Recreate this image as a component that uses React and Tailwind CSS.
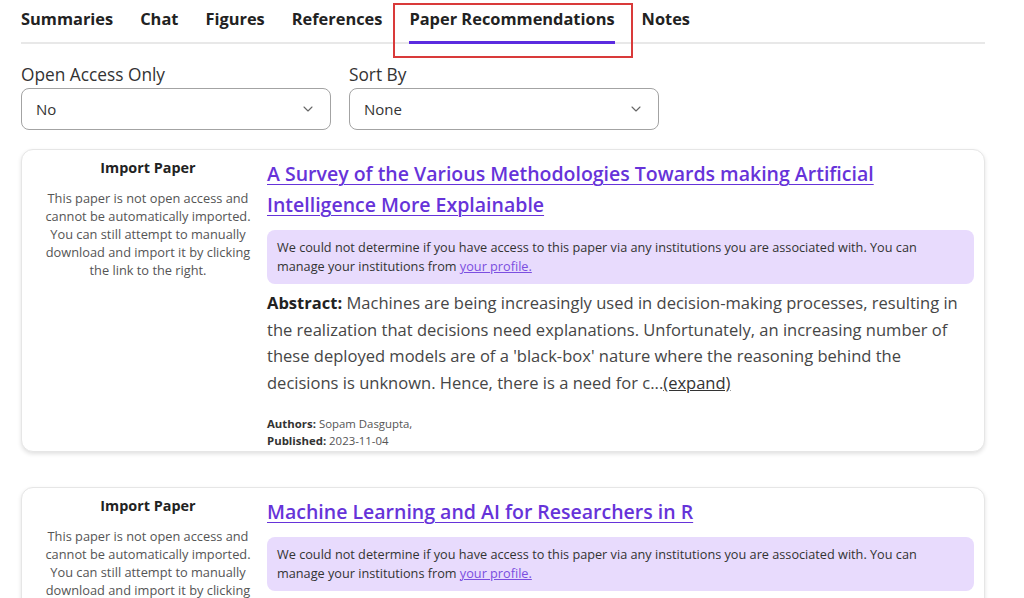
import React from "react";
import { ChevronDown } from "lucide-react";

const font = { fontFamily: "'Open Sans', 'Noto Sans', sans-serif" };

const tabs = ["Summaries", "Chat", "Figures", "References", "Paper Recommendations", "Notes"];

function Select({ label, value }) {
  return (
    <div className="flex flex-col w-[310px]">
      <div className="text-[17.3px] leading-[24px] text-[#333]">{label}</div>
      <div className="mt-[1px] h-[42px] rounded-lg border border-[#a3a3a3] flex items-center justify-between pl-[14px] pr-[14px]">
        <span className="text-[15px] text-[#333]">{value}</span>
        <ChevronDown size={16} strokeWidth={1.6} className="text-[#666]" />
      </div>
    </div>
  );
}

function Card({ title, abstract, authors, published }) {
  return (
    <div className="rounded-xl border border-[#e6e6e6] bg-white shadow-[0_2px_4px_rgba(0,0,0,0.12)] flex pl-[21px] pr-[10px] pt-[8px] pb-[2px] gap-[14px]">
      <div className="w-[210px] shrink-0 text-center">
        <div className="text-[14.4px] leading-[20px] font-bold text-[#222]">Import Paper</div>
        <div className="mt-[11px] text-[12.8px] leading-[18px] text-[#555]">
          This paper is not open access and cannot be automatically imported. You can still attempt to manually download and import it by clicking the link to the right.
        </div>
      </div>
      <div className="flex-1 min-w-0">
        <a className="block text-[19.5px] leading-[31px] font-semibold text-[#6633d9] underline underline-offset-[3px] decoration-1 pr-[80px]">
          {title}
        </a>
        <div className="mt-[10px] rounded-lg bg-[#e8dbfd] px-[10px] py-[8px] text-[12.7px] leading-[19px] text-[#333]">
          We could not determine if you have access to this paper via any institutions you are associated with. You can manage your institutions from{" "}
          <span className="text-[#7b4ee0] underline">your profile.</span>
        </div>
        {abstract && (
          <>
            <p className="mt-[6px] text-[16.55px] leading-[26.7px] text-[#464646]">
              <span className="font-bold text-[#222]">Abstract:</span> {abstract}
              <span className="underline text-[#333]">(expand)</span>
            </p>
            <div className="mt-[18px] text-[11.4px] leading-[17px] text-[#555]">
              <div><span className="font-bold text-[#333]">Authors:</span> {authors}</div>
              <div><span className="font-bold text-[#333]">Published:</span> {published}</div>
            </div>
          </>
        )}
      </div>
    </div>
  );
}

export default function App() {
  return (
    <div className="relative w-[1024px] h-[598px] overflow-hidden bg-white" style={font}>
      <div className="ml-[21px] w-[964px]">
        <div className="flex gap-[27px] border-b-2 border-[#e8e8e8]">
          {tabs.map((t) => (
            <div
              key={t}
              className={
                "pt-[7px] pb-[10px] leading-[24px] text-[16.4px] font-bold text-[#222] border-b-[3px] -mb-[2px] " +
                (t === "Paper Recommendations" ? "border-[#5b2be0]" : "border-transparent")
              }
            >
              {t}
            </div>
          ))}
        </div>
        <div className="mt-[19px] flex gap-[18px]">
          <Select label="Open Access Only" value="No" />
          <Select label="Sort By" value="None" />
        </div>
        <div className="mt-[19px] flex flex-col gap-[35px]">
          <Card
            title="A Survey of the Various Methodologies Towards making Artificial Intelligence More Explainable"
            abstract="Machines are being increasingly used in decision-making processes, resulting in the realization that decisions need explanations. Unfortunately, an increasing number of these deployed models are of a 'black-box' nature where the reasoning behind the decisions is unknown. Hence, there is a need for c..."
            authors="Sopam Dasgupta,"
            published="2023-11-04"
          />
          <Card title="Machine Learning and AI for Researchers in R" />
        </div>
      </div>
      <div className="absolute left-[393px] top-[3px] w-[240px] h-[55px] border-2 border-[#d93a3a]" />
    </div>
  );
}
